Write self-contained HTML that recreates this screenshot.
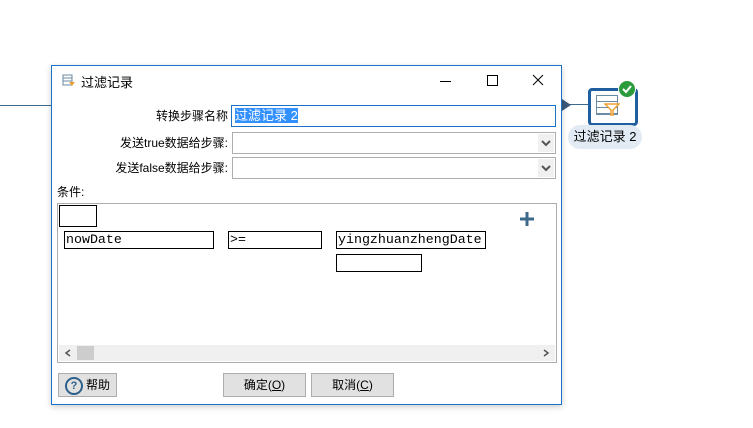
<!DOCTYPE html>
<html><head><meta charset="utf-8"><style>
body{margin:0;width:753px;height:428px;background:#fff;position:relative;overflow:hidden;font-family:"Liberation Sans","Noto Sans CJK SC",sans-serif;font-size:12px;color:#000}
.a{position:absolute}
.lbl{position:absolute;text-align:right;width:180px;left:48px}
.combo{position:absolute;left:232px;width:322px;height:20px;border:1px solid #adadad;background:#fff}
.combo .btn{position:absolute;right:1px;top:1px;width:16px;height:18px;background:#f0f0f0}
.mono{font-family:"Liberation Mono",monospace;font-size:13.3px;border:1px solid #000;position:absolute;line-height:16px;padding-left:1px;box-sizing:border-box;height:18px;white-space:nowrap;overflow:hidden}
.b{position:absolute;background:#e1e1e1;border:1px solid #adadad;height:22px;line-height:22px;text-align:center;font-size:12px}
</style></head><body>
<div class="a" style="left:0;top:105px;width:52px;height:1px;background:#3c6a8c"></div>
<div class="a" style="left:561px;top:104px;width:28px;height:1px;background:#3c6a8c"></div>
<div class="a" style="left:562px;top:99px;width:0;height:0;border-left:9px solid #3c5a7a;border-top:6px solid transparent;border-bottom:6px solid transparent"></div>
<div class="a" style="left:588px;top:88px;width:44px;height:32px;border:3px solid #1f5fa0;border-radius:4px;background:#fff"></div>
<div class="a" style="left:596px;top:95px;width:20px;height:18px;border:1px solid #6b8aa3;background:repeating-linear-gradient(#fff 0 5px,#6b8aa3 5px 6px)"></div>
<svg class="a" style="left:604px;top:103px" width="16" height="14"><path d="M1 1 L15 1 L9 7 L9 12 L7 12 L7 7 Z" fill="#fff" stroke="#f0a030" stroke-width="1.5"/></svg>
<div class="a" style="left:618px;top:80px;width:16px;height:16px;border-radius:50%;background:#2a9a3a;border:1px solid #fff"></div>
<svg class="a" style="left:621px;top:83px" width="12" height="12"><path d="M2 6 L5 9 L10 3" stroke="#fff" stroke-width="2" fill="none"/></svg>
<div class="a" style="left:568px;top:125px;width:74px;height:24px;border-radius:12px;background:#e2ebf3;text-align:center;line-height:24px;font-size:13px">过滤记录 2</div>

<div class="a" style="left:51px;top:65px;width:509px;height:338px;border:1px solid #1a73c8;background:#fff;box-shadow:0 2px 6px rgba(0,0,0,.2)">
 <svg class="a" style="left:10px;top:8px" width="14" height="14"><rect x="1" y="1" width="9" height="10" fill="none" stroke="#6b8aa3"/><path d="M1 4h9M1 7h9" stroke="#6b8aa3"/><path d="M7 8h6l-3 4z" fill="#f0a030"/></svg>
 <div class="a" style="left:29px;top:6px;font-size:13px">过滤记录</div>
 <div class="a" style="left:388px;top:15px;width:11px;height:1px;background:#000"></div>
 <div class="a" style="left:435px;top:9px;width:9px;height:9px;border:1px solid #000"></div>
 <svg class="a" style="left:480px;top:8px" width="12" height="12"><path d="M1 1L11 11M11 1L1 11" stroke="#000"/></svg>
</div>
<div class="lbl" style="top:107px">转换步骤名称</div>
<div class="a" style="left:231px;top:105px;width:323px;height:20px;border:1px solid #1a73c8;background:#fff"><span style="background:#3390ff;color:#fff;margin-left:3px;line-height:20px;font-size:13px">过滤记录 2</span></div>
<div class="lbl" style="top:134px">发送true数据给步骤:</div>
<div class="combo" style="top:132px"><div class="btn"><svg width="16" height="18"><path d="M4 7l4 4 4-4" stroke="#555" stroke-width="2" fill="none"/></svg></div></div>
<div class="lbl" style="top:159px">发送false数据给步骤:</div>
<div class="combo" style="top:157px"><div class="btn"><svg width="16" height="18"><path d="M4 7l4 4 4-4" stroke="#555" stroke-width="2" fill="none"/></svg></div></div>
<div class="a" style="left:57px;top:183px">条件:</div>
<div class="a" style="left:57px;top:203px;width:498px;height:158px;border:1px solid #adadad;background:#fff">
 <div class="a" style="left:1px;top:1px;width:36px;height:20px;border:1px solid #000"></div>
 <svg class="a" style="left:461px;top:7px" width="16" height="16"><path d="M8 1v14M1 8h14" stroke="#3c6a8c" stroke-width="3"/></svg>
 <div class="mono" style="left:6px;top:27px;width:150px">nowDate</div>
 <div class="mono" style="left:170px;top:27px;width:94px">&gt;=</div>
 <div class="mono" style="left:278px;top:27px;width:150px">yingzhuanzhengDate</div>
 <div class="mono" style="left:278px;top:50px;width:86px"></div>
 <div class="a" style="left:1px;top:141px;width:496px;height:16px;background:#f0f0f0">
  <svg class="a" style="left:5px;top:4px" width="8" height="8"><path d="M6 1L2 4l4 3" stroke="#555" stroke-width="1.5" fill="none"/></svg>
  <div class="a" style="left:18px;top:1px;width:17px;height:14px;background:#cdcdcd"></div>
  <svg class="a" style="right:5px;top:4px" width="8" height="8"><path d="M2 1l4 3-4 3" stroke="#555" stroke-width="1.5" fill="none"/></svg>
 </div>
</div>
<div class="b" style="left:58px;top:373px;width:57px"><span style="display:inline-block;width:14px;height:14px;border:2px solid #2d5f8a;border-radius:50%;font-size:11px;line-height:14px;font-weight:bold;color:#2d5f8a;vertical-align:middle;margin-right:3px">?</span>帮助</div>
<div class="b" style="left:223px;top:373px;width:81px">确定(<u>O</u>)</div>
<div class="b" style="left:311px;top:373px;width:81px">取消(<u>C</u>)</div>
</body></html>
